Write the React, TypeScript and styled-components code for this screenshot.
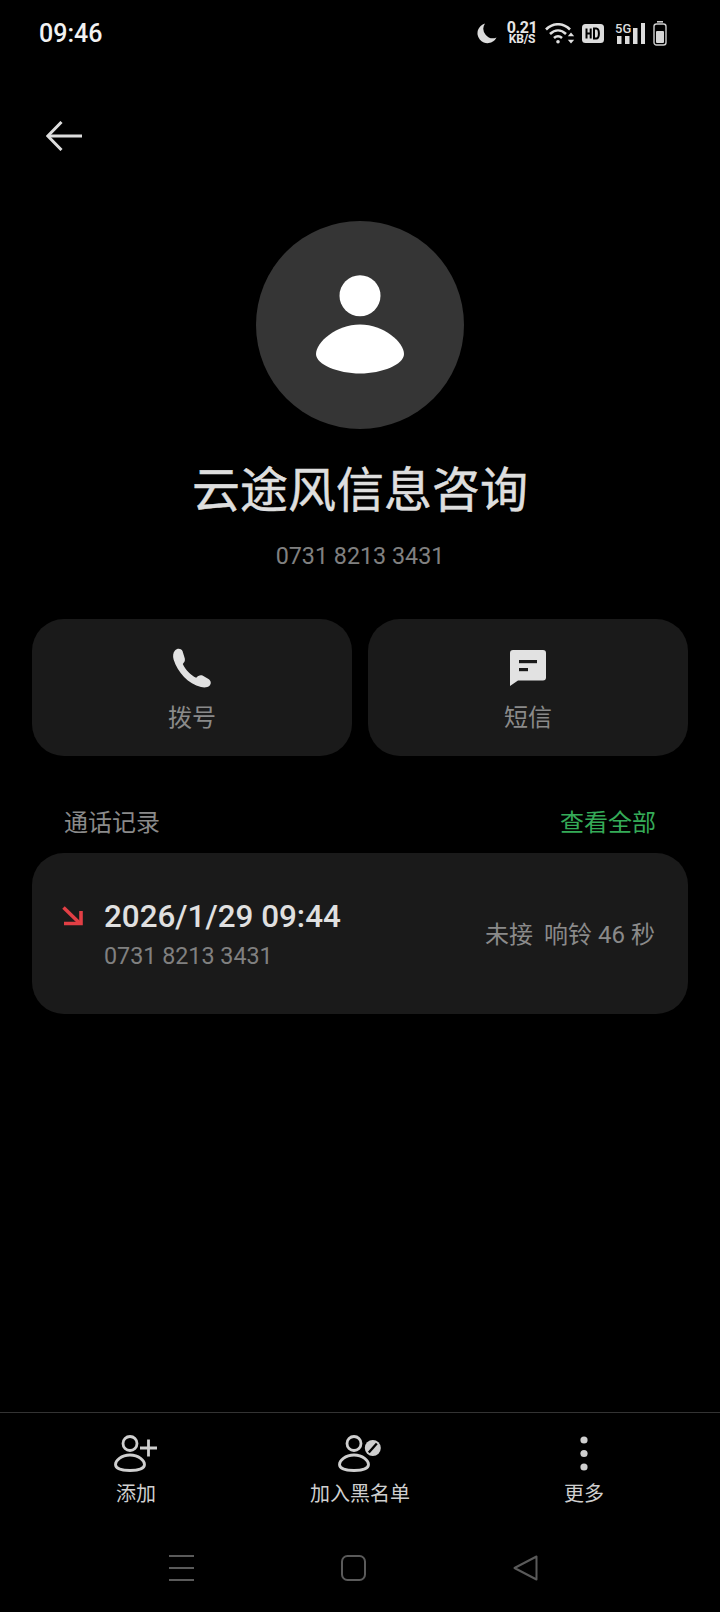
import React from 'react';
import styled, { createGlobalStyle } from 'styled-components';

const GlobalStyle = createGlobalStyle`
  html, body {
    margin: 0;
    padding: 0;
    background: #000;
  }
  body {
    font-family: Roboto, "Noto Sans CJK SC", sans-serif;
  }
`;

const Page = styled.div`
  width: 720px;
  height: 1612px;
  background: #000;
  display: flex;
  flex-direction: column;
  overflow: hidden;
`;

const StatusBar = styled.div`
  height: 66px;
  padding: 0 53px 0 39px;
  display: flex;
  align-items: center;
  justify-content: space-between;
`;

const Clock = styled.span`
  font-size: 25px;
  font-weight: 500;
  color: #f2f2f2;
`;

const StatusIcons = styled.div`
  display: flex;
  align-items: center;
`;

const StatusSlot = styled.div<{ $left: number }>`
  margin-left: ${(p) => p.$left}px;
  display: flex;
`;

const Speed = styled.div`
  width: 30px;
  display: flex;
  flex-direction: column;
  align-items: center;
  color: #e6e6e6;
  font-weight: 700;
`;

const SpeedValue = styled.span`
  font-size: 16px;
  line-height: 12px;
  letter-spacing: -0.4px;
`;

const SpeedUnit = styled.span`
  font-size: 12px;
  line-height: 10px;
  letter-spacing: -0.2px;
`;

const BackRow = styled.div`
  padding: 55px 0 0 46px;
  display: flex;
`;

const Profile = styled.div`
  margin-top: 70px;
  display: flex;
  flex-direction: column;
  align-items: center;
`;

const Avatar = styled.div`
  width: 208px;
  height: 208px;
  border-radius: 50%;
  background: #353535;
  display: flex;
  align-items: center;
  justify-content: center;
`;

const Name = styled.h1`
  margin: 27px 0 0;
  font-family: "Noto Sans CJK SC", sans-serif;
  font-size: 48px;
  line-height: 60px;
  font-weight: 400;
  color: #dedede;
  -webkit-text-stroke: 0.5px #dedede;
`;

const Number = styled.div`
  margin-top: 24px;
  font-size: 23.3px;
  line-height: 32px;
  color: #808080;
`;

const Actions = styled.div`
  margin-top: 47px;
  padding: 0 32px;
  display: grid;
  grid-template-columns: 1fr 1fr;
  gap: 16px;
`;

const ActionCard = styled.div`
  height: 137px;
  border-radius: 32px;
  background: #1a1a1a;
  padding-top: 29px;
  box-sizing: border-box;
  display: flex;
  flex-direction: column;
  align-items: center;
`;

const ActionIcon = styled.div`
  height: 40px;
  display: flex;
  align-items: center;
`;

const ActionLabel = styled.div`
  margin-top: 12px;
  font-family: "Noto Sans CJK SC", sans-serif;
  font-size: 24px;
  line-height: 32px;
  color: #8a8a8a;
`;

const SectionHead = styled.div`
  margin-top: 49px;
  padding: 0 64px;
  display: flex;
  justify-content: space-between;
  font-family: "Noto Sans CJK SC", sans-serif;
  font-size: 24px;
  line-height: 32px;
`;

const SectionTitle = styled.span`
  color: #8a8a8a;
`;

const SectionLink = styled.span`
  color: #35ab58;
`;

const LogCard = styled.div`
  margin: 16px 32px 0;
  height: 161px;
  padding: 3px 33px 0 30px;
  box-sizing: border-box;
  border-radius: 32px;
  background: #1a1a1a;
  display: flex;
  align-items: center;
  justify-content: space-between;
`;

const LogLeft = styled.div`
  display: flex;
  align-items: flex-start;
  gap: 21px;
`;

const MissedIcon = styled.div`
  margin-top: 8px;
  display: flex;
`;

const LogText = styled.div`
  display: flex;
  flex-direction: column;
  gap: 4px;
`;

const LogDate = styled.div`
  font-size: 31.4px;
  line-height: 38px;
  font-weight: 500;
  color: #e0e0e0;
`;

const LogNumber = styled.div`
  font-size: 23.3px;
  line-height: 32px;
  color: #808080;
`;

const LogStatus = styled.div`
  font-family: Roboto, "Noto Sans CJK SC", sans-serif;
  font-size: 24px;
  line-height: 32px;
  color: #8a8a8a;
  display: flex;
  gap: 11px;
`;

const Footer = styled.div`
  margin-top: auto;
  height: 200px;
  box-sizing: border-box;
  border-top: 1px solid #333;
  display: flex;
  flex-direction: column;
`;

const Toolbar = styled.div`
  padding: 22px 24px 0;
  display: grid;
  grid-template-columns: repeat(3, 224px);
`;

const ToolItem = styled.div`
  display: flex;
  flex-direction: column;
  align-items: center;
  gap: 7px;
`;

const ToolIcon = styled.div`
  height: 37px;
  display: flex;
  justify-content: center;
`;

const ToolLabel = styled.div`
  font-family: "Noto Sans CJK SC", sans-serif;
  font-size: 20px;
  line-height: 28px;
  color: #cfcfcf;
`;

const NavBar = styled.div`
  margin-top: 41px;
  padding-left: 95px;
  display: grid;
  grid-template-columns: repeat(3, 172px);
`;

const NavItem = styled.div`
  height: 40px;
  display: flex;
  align-items: center;
  justify-content: center;
`;

const Moon = () => (
  <svg width="20" height="21" viewBox="0 0 20 21">
    <path d="M8 0.5A10 10 0 1 0 19.5 14.5 9.5 9.5 0 0 1 8 .5Z" fill="#dcdcdc" />
  </svg>
);

const Wifi = () => (
  <svg width="30" height="21" viewBox="0 0 30 21" fill="none" stroke="#e0e0e0" strokeWidth="2.6">
    <path d="M1 6.5C8 -0.5 18 -0.5 25 6.5" />
    <path d="M5 11C10 6.3 16 6.3 21 11" />
    <path d="M9 15C11.5 12.8 14.5 12.8 17 15" />
    <circle cx="13" cy="18.7" r="1.8" fill="#e0e0e0" stroke="none" />
    <path d="M26 9.5l3.2 3.8h-6.4zM26 20.5l3.2-3.8h-6.4z" fill="#e0e0e0" stroke="none" />
  </svg>
);

const HdBadge = () => (
  <svg width="22" height="19" viewBox="0 0 22 19">
    <rect width="22" height="19" rx="3.5" fill="#dcdcdc" />
    <path d="M4.5 4.5v10M8.7 4.5v10M4.5 9.5h4.2" stroke="#000" strokeWidth="2" fill="none" />
    <path d="M12 4.5v10h2.2c3.6 0 3.6-10 0-10Z" stroke="#000" strokeWidth="2" fill="none" />
  </svg>
);

const Signal = () => (
  <svg width="30" height="27" viewBox="0 -2 30 27" fill="#dcdcdc">
    <text x="0" y="10.5" fontFamily="Roboto, sans-serif" fontSize="13" fontWeight="500">5G</text>
    <rect x="2" y="14" width="4.5" height="8" />
    <rect x="10" y="14" width="4.5" height="8" />
    <rect x="18" y="6" width="4.5" height="16" />
    <rect x="26" y="1" width="4" height="21" />
  </svg>
);

const Battery = () => (
  <svg width="14" height="25" viewBox="0 0 14 25" fill="none">
    <rect x="4" y="0" width="6" height="1.6" fill="#cfcfcf" />
    <rect x="1" y="3" width="12" height="21" rx="2.5" stroke="#cfcfcf" strokeWidth="1.4" />
    <rect x="3" y="10" width="8" height="12" rx="1" fill="#d8d8d8" />
  </svg>
);

const BackArrow = () => (
  <svg width="36" height="30" viewBox="0 0 36 30" fill="none" stroke="#dddddd" strokeWidth="3">
    <path d="M15.5 1L1.8 15 15.5 29" />
    <path d="M2 15H36" />
  </svg>
);

const PersonGlyph = () => (
  <svg width="88" height="106" viewBox="0 0 88 106" fill="#fff">
    <circle cx="44" cy="23.7" r="20.5" />
    <path d="M44 52.4C20 52.4 0 70.4 0 81.9 0 92.4 22 101.4 44 101.4S88 92.4 88 81.9C88 70.4 68 52.4 44 52.4Z" />
  </svg>
);

const PhoneGlyph = () => (
  <svg width="40" height="40" viewBox="0 0 40 40" fill="#e2e2e2">
    <path d="M3 2.5C5 .2 9 .2 10.5 3L12.8 10.5C13.4 13 12 14.5 10.8 16 13.5 22 18.5 27 24.2 29.8 25.8 28 28 26.5 30.5 27.5L36.5 31C39.5 33 39.2 36 37.5 37.8 35.8 39.4 32.5 39.8 29 39 16.5 36 5.5 24.5 1.6 11.5 .7 8 1 4.5 3 2.5Z" />
  </svg>
);

const MessageGlyph = () => (
  <svg width="36" height="36" viewBox="0 0 36 36">
    <path d="M3 0H33A3 3 0 0 1 36 3V27.5A3 3 0 0 1 33 30.5H8L0 36V3A3 3 0 0 1 3 0Z" fill="#e2e2e2" />
    <rect x="9" y="10" width="18" height="3.2" fill="#1a1a1a" />
    <rect x="9" y="18" width="9" height="3.2" fill="#1a1a1a" />
  </svg>
);

const MissedArrow = () => (
  <svg width="21" height="20" viewBox="0 0 21 20" fill="none" stroke="#e23f45" strokeWidth="3.6">
    <path d="M1.5 1.5L18 17.5" />
    <path d="M2 17.5H19V5" />
  </svg>
);

const PersonOutline = () => (
  <>
    <circle cx="16" cy="8.5" r="7" />
    <path d="M16 20C7 20 1.5 26 1.5 29.5 1.5 33.5 8 35.5 16 35.5S30.5 33.5 30.5 29.5C30.5 26 25 20 16 20Z" />
  </>
);

const AddPerson = () => (
  <svg width="44" height="37" viewBox="0 0 44 37" fill="none" stroke="#cfcfcf" strokeWidth="2.8">
    <PersonOutline />
    <path d="M26 13H43M34.5 4.5V21.5" />
  </svg>
);

const BlockPerson = () => (
  <svg width="45" height="37" viewBox="0 0 45 37" fill="none" stroke="#cfcfcf" strokeWidth="2.8">
    <PersonOutline />
    <circle cx="34.8" cy="13" r="8" fill="#cfcfcf" stroke="none" />
    <path d="M30.8 17.5L38.8 8.5" stroke="#000" strokeWidth="2.4" />
  </svg>
);

const MoreDots = () => (
  <svg width="10" height="37" viewBox="0 0 10 37" fill="#cfcfcf">
    <circle cx="5" cy="5" r="3.6" />
    <circle cx="5" cy="18.5" r="3.6" />
    <circle cx="5" cy="32" r="3.6" />
  </svg>
);

const NavMenu = () => (
  <svg width="25" height="26" viewBox="0 0 25 26" stroke="#5a5a5a" strokeWidth="2">
    <path d="M0 1H25M0 13H25M0 25H25" />
  </svg>
);

const NavHome = () => (
  <svg width="25" height="26" viewBox="0 0 25 26" fill="none" stroke="#5a5a5a" strokeWidth="2">
    <rect x="1" y="1" width="23" height="24" rx="5.5" />
  </svg>
);

const NavBack = () => (
  <svg width="25" height="26" viewBox="0 0 25 26" fill="none" stroke="#5a5a5a" strokeWidth="2" strokeLinejoin="round">
    <path d="M1.5 13L23.5 1.5V24.5Z" />
  </svg>
);

const toolItems = [
  { label: '添加', icon: <AddPerson /> },
  { label: '加入黑名单', icon: <BlockPerson /> },
  { label: '更多', icon: <MoreDots /> },
];

export default function App() {
  return (
    <Page>
      <GlobalStyle />
      <StatusBar>
        <Clock>09:46</Clock>
        <StatusIcons>
          <Moon />
          <StatusSlot $left={10}>
            <Speed>
              <SpeedValue>0.21</SpeedValue>
              <SpeedUnit>KB/S</SpeedUnit>
            </Speed>
          </StatusSlot>
          <StatusSlot $left={8}><Wifi /></StatusSlot>
          <StatusSlot $left={7}><HdBadge /></StatusSlot>
          <StatusSlot $left={11}><Signal /></StatusSlot>
          <StatusSlot $left={8}><Battery /></StatusSlot>
        </StatusIcons>
      </StatusBar>

      <BackRow>
        <BackArrow />
      </BackRow>

      <Profile>
        <Avatar>
          <PersonGlyph />
        </Avatar>
        <Name>云途风信息咨询</Name>
        <Number>0731 8213 3431</Number>
      </Profile>

      <Actions>
        <ActionCard>
          <ActionIcon><PhoneGlyph /></ActionIcon>
          <ActionLabel>拨号</ActionLabel>
        </ActionCard>
        <ActionCard>
          <ActionIcon><MessageGlyph /></ActionIcon>
          <ActionLabel>短信</ActionLabel>
        </ActionCard>
      </Actions>

      <SectionHead>
        <SectionTitle>通话记录</SectionTitle>
        <SectionLink>查看全部</SectionLink>
      </SectionHead>

      <LogCard>
        <LogLeft>
          <MissedIcon><MissedArrow /></MissedIcon>
          <LogText>
            <LogDate>2026/1/29 09:44</LogDate>
            <LogNumber>0731 8213 3431</LogNumber>
          </LogText>
        </LogLeft>
        <LogStatus>
          <span>未接</span>
          <span>响铃 46 秒</span>
        </LogStatus>
      </LogCard>

      <Footer>
        <Toolbar>
          {toolItems.map((item) => (
            <ToolItem key={item.label}>
              <ToolIcon>{item.icon}</ToolIcon>
              <ToolLabel>{item.label}</ToolLabel>
            </ToolItem>
          ))}
        </Toolbar>
        <NavBar>
          <NavItem><NavMenu /></NavItem>
          <NavItem><NavHome /></NavItem>
          <NavItem><NavBack /></NavItem>
        </NavBar>
      </Footer>
    </Page>
  );
}
